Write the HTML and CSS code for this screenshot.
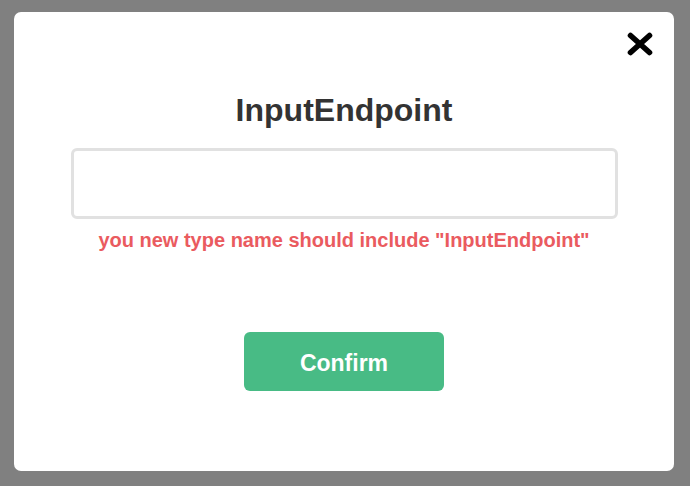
FILE: index.html
```html
<!DOCTYPE html>
<html lang="en">
<head>
<meta charset="utf-8">
<title>InputEndpoint</title>
<link rel="stylesheet" href="styles.css">
</head>
<body>
<div class="modal">
  <button class="close" type="button" aria-label="Close">
    <svg width="26" height="24" viewBox="0 0 26 24">
      <path d="M3.5 3.5 L22.5 20.5 M22.5 3.5 L3.5 20.5" stroke="#000" stroke-width="5.6" stroke-linecap="round" fill="none"/>
    </svg>
  </button>
  <h1 class="title">InputEndpoint</h1>
  <input class="name-input" type="text">
  <p class="error">you new type name should include "InputEndpoint"</p>
  <button class="confirm" type="button">Confirm</button>
</div>
</body>
</html>
```

FILE: styles.css
```css
html, body {
  margin: 0;
  height: 100%;
}
body {
  background: #808080;
  padding: 12px 16px 0 14px;
  box-sizing: border-box;
  font-family: "Liberation Sans", Arial, sans-serif;
}
.modal {
  position: relative;
  width: 660px;
  height: 459px;
  background: #fff;
  border-radius: 7px;
  box-sizing: border-box;
  padding-top: 82px;
  display: flex;
  flex-direction: column;
  align-items: center;
}
.close {
  position: absolute;
  left: 613px;
  top: 20px;
  width: 26px;
  height: 24px;
  padding: 0;
  border: 0;
  background: none;
  display: block;
  filter: blur(0.4px);
}
.close svg {
  display: block;
}
.title {
  margin: 0;
  font-size: 32px;
  line-height: 32px;
  font-weight: bold;
  color: #333;
}
.name-input {
  margin: 22px 0 0;
  width: 547px;
  height: 71px;
  box-sizing: border-box;
  border: 3px solid #e1e1e1;
  border-radius: 6px;
  background: #fff;
  outline: none;
}
.error {
  margin: 11px 0 0;
  font-size: 20px;
  line-height: 20px;
  font-weight: bold;
  color: #ea5b5f;
}
.confirm {
  margin-top: 82px;
  width: 200px;
  height: 59px;
  box-sizing: border-box;
  border: 0;
  border-radius: 6px;
  background: #48bb85;
  color: #fff;
  font-family: "Liberation Sans", Arial, sans-serif;
  font-size: 23px;
  line-height: 55px;
  font-weight: bold;
  padding: 4px 0 0;
}
```
